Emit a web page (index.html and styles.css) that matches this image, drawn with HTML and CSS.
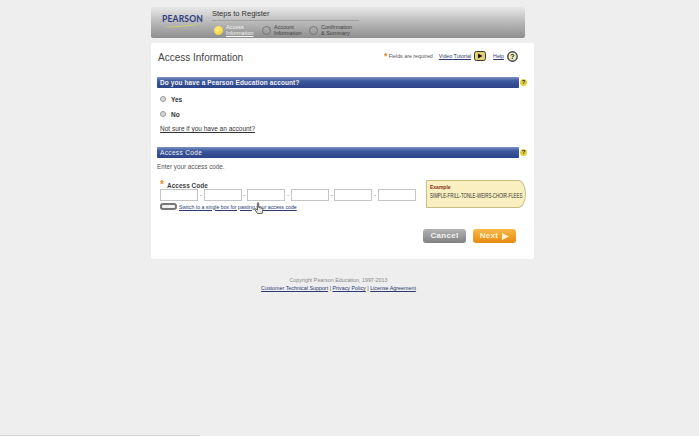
FILE: index.html
```html
<!DOCTYPE html>
<html lang="en">
<head>
<meta charset="utf-8">
<title>Access Information</title>
<link rel="stylesheet" href="styles.css">
</head>
<body>
<div class="page">
  <header class="top">
    <div class="logo"><span class="logo-text">PEARSON</span>
      <svg class="swoosh" width="40" height="4" viewBox="0 0 40 4"><path d="M1 3 Q20 2 39 0 Q20 4 1 3Z" fill="#d8d060"/></svg>
    </div>
    <div class="steps-wrap">
      <div class="steps-title">Steps to Register</div>
      <div class="steps">
        <div class="step on"><span class="dot"></span><span class="lab">Access<br><u>Information</u></span></div>
        <div class="step"><span class="dot"></span><span class="lab">Account<br>Information</span></div>
        <div class="step"><span class="dot"></span><span class="lab">Confirmation<br>&amp; Summary</span></div>
      </div>
    </div>
  </header>
  <main class="card">
    <div class="head">
      <h1>Access Information</h1>
      <div class="tools">
        <span class="star">*</span><span class="req">Fields are required</span>
        <a class="vt">Video Tutorial</a>
        <svg class="play" width="12" height="10" viewBox="0 0 12 10"><rect x=".5" y=".5" width="11" height="9" rx="2" fill="#e3d270" stroke="#333"/><path d="M4 2.500 8.500 5 4 7.500Z" fill="#111"/></svg>
        <a class="hp">Help</a>
        <svg class="q" width="11" height="11" viewBox="0 0 11 11"><circle cx="5.500" cy="5.500" r="4.700" fill="#eee9b0" stroke="#3b3f5c" stroke-width="1.400"/><text x="5.500" y="8" text-anchor="middle" class="qt">?</text></svg>
      </div>
    </div>

    <div class="bar-row bar-first"><div class="bar">Do you have a Pearson Education account?</div><span class="hint">?</span></div>
    <div class="choices">
      <label class="choice"><span class="radio"></span>Yes</label>
      <label class="choice"><span class="radio"></span>No</label>
    </div>
    <a class="notsure">Not sure if you have an account?</a>

    <div class="bar-row bar-second"><div class="bar">Access Code</div><span class="hint">?</span></div>
    <p class="enter">Enter your access code.</p>

    <div class="code-row">
      <div class="code-left">
        <div class="code-label"><span class="star2">*</span>Access Code</div>
        <div class="inputs">
          <span class="box"></span><i>-</i><span class="box"></span><i>-</i><span class="box"></span><i>-</i><span class="box"></span><i>-</i><span class="box"></span><i>-</i><span class="box"></span>
        </div>
        <div class="switch"><span class="mini"></span><a>Switch to a single box for pasting your access code</a>
          <svg class="cursor" width="10" height="13" viewBox="0 0 9 12"><path d="M3 1.200c0-.8 1.200-.8 1.200 0V5l3 .8c.8.3 1 .8.9 1.500L7.500 10.500H3L.8 7.200c-.4-.8.5-1.300 1-.8L3 7.500Z" fill="#eee" stroke="#444" stroke-width=".8"/></svg>
        </div>
      </div>
      <div class="example"><b>Example</b><span>SIMPLE-FRILL-TONLE-WEIRS-CHOIR-FLEES</span></div>
    </div>

    <div class="actions">
      <span class="btn cancel">Cancel</span>
      <span class="btn next">Next<svg width="7" height="7" viewBox="0 0 7 7"><path d="M0 0 7 3.500 0 7Z" fill="#fff4d8"/></svg></span>
    </div>
  </main>
  <footer class="foot">
    <div>Copyright Pearson Education, 1997-2013</div>
    <div class="links"><a>Customer Technical Support</a> | <a>Privacy Policy</a> | <a>License Agreement</a></div>
  </footer>
</div>
<div class="scroll"></div>
</body>
</html>
```
FILE: styles.css
```css
* { box-sizing: border-box; }
html { background: #eeeeee; }
html, body { margin: 0; height: 100%; }
body { background: #eeeeee; font-family: "Liberation Sans", Arial, sans-serif; color: #444; overflow: hidden; position: relative; }
.page { width: 383px; margin-left: 151px; padding-top: 7px; }
a { color: #2c3a70; text-decoration: underline; }

.top { width: 374px; height: 31px; display: flex; background: linear-gradient(#e8e8e8, #bdbdbd 45%, #8e8e8e); border-radius: 2px; }
.logo { width: 61px; display: flex; flex-direction: column; align-items: center; padding: 7px 0 0 2px; }
.logo-text { font: bold 8.500px/10px Lato, "Liberation Sans", sans-serif; color: #2f3b80; letter-spacing: .2px; }
.steps-wrap { padding-top: 2px; flex: 1; }
.steps-title { font-size: 7.500px; line-height: 10px; color: #333; padding-bottom: 1px; width: 147px; border-bottom: 1px solid #a0a0a0; }
.steps { display: flex; margin-top: 3px; padding-left: 2px; }
.step { display: flex; align-items: center; gap: 3px; font-size: 5.500px; line-height: 6px; color: #444; }
.step:nth-child(1) { width: 48px; }
.step:nth-child(2) { width: 47px; }
.step .dot { width: 9px; height: 9px; border-radius: 50%; border: 1px solid #777; flex: none; }
.step.on .dot { background: radial-gradient(circle at 40% 40%, #fff27a, #efc52a); border: 0; }
.step.on .lab { color: #f4f4f4; }

.card { background: #fff; height: 216px; margin-top: 5px; padding: 0 6px; border-radius: 2px; }
.head { display: flex; justify-content: space-between; height: 32px; }
h1 { margin: 0; padding: 8px 0 0 1px; font-size: 10px; line-height: 14px; font-weight: normal; color: #444; }
.tools { display: flex; align-items: center; height: 26px; font-size: 5.300px; padding-right: 10px; }
.star { color: #e58a1f; font-size: 9px; line-height: 9px; font-weight: bold; margin-right: 1px; }
.req { color: #555; }
.vt { margin-left: 6px; }
.play { margin-left: 3px; }
.hp { margin-left: 7px; }
.q { margin-left: 3px; }
.qt { font: bold 7px "Liberation Sans", sans-serif; fill: #222; }

.bar-row { display: flex; align-items: center; gap: 1px; }
.bar-first { margin-top: 2px; }
.bar-second { margin-top: 14px; }
.bar { width: 362px; height: 11px; background: linear-gradient(#7b92c4, #3e5a9e 35%, #2b4288); border-radius: 1px; color: #f2f2f2; font-size: 6.500px; font-weight: bold; line-height: 11px; padding-left: 3px; letter-spacing: .1px; }
.bar-second .bar { font-weight: normal; letter-spacing: .35px; }
.hint { width: 7px; height: 7px; border-radius: 50%; background: #e2d23a; color: #222; font-size: 6px; font-weight: bold; line-height: 7px; text-align: center; }

.choices { display: flex; flex-direction: column; gap: 9px; padding: 8px 0 0 3px; }
.choice { display: flex; align-items: center; gap: 5px; height: 6px; font-size: 6.500px; font-weight: bold; color: #333; }
.radio { width: 6px; height: 6px; border-radius: 50%; background: #d8d8d8; border: 1px solid #999; }
.notsure { display: block; font-size: 6.500px; line-height: 8px; margin: 8px 0 0 3px; color: #333; }

.enter { margin: 5px 0 0; font-size: 6.300px; line-height: 8px; color: #555; }
.code-row { display: flex; justify-content: space-between; margin-top: 9px; }
.code-left { padding-left: 3px; }
.code-label { display: flex; font-size: 6.500px; font-weight: bold; line-height: 8px; color: #444; height: 9px; padding-top: 2px; }
.star2 { color: #e58a1f; width: 7px; font-size: 10px; line-height: 5px; }
.inputs { display: flex; align-items: center; }
.box { width: 38px; height: 12px; background: #fff; border: 1px solid #c4c4c4; }
.inputs i { width: 5.600px; text-align: center; font-size: 6px; font-style: normal; color: #666; }
.switch { display: flex; align-items: center; gap: 2px; margin-top: 2px; font-size: 5.200px; position: relative; height: 7px; }
.mini { width: 17px; height: 7px; border-radius: 3px; background: #f2f2f2; border: 2px solid #777; }
.cursor { position: absolute; left: 94px; top: -1px; }
.example { width: 100px; height: 28px; margin: 0 2px 0 0; background: #faefc0; border: 1px solid #c8bd86; border-radius: 1px 8px 8px 1px / 1px 14px 14px 1px; padding: 3px; display: flex; flex-direction: column; font-size: 5px; line-height: 7px; color: #333; }
.example b { color: #8c2a1a; }
.example span { font-size: 4.400px; white-space: nowrap; margin-top: 1px; transform: scaleY(1.45); }

.actions { display: flex; justify-content: flex-end; gap: 7px; padding-right: 12px; margin-top: 19px; }
.btn { height: 14px; border-radius: 3px; font-size: 8px; line-height: 14px; font-weight: bold; color: #f4f4f4; text-align: center; letter-spacing: .3px; }
.cancel { width: 43px; background: linear-gradient(#b4b4b4, #808080); }
.next { width: 43px; background: linear-gradient(#fbb948, #e58a12); color: #fff4d8; display: flex; align-items: center; justify-content: center; gap: 4px; }

.foot { text-align: center; font-size: 5.350px; line-height: 8px; color: #888; margin-top: 17px; padding-right: 8px; }
.links { color: #444; }
.scroll { position: absolute; left: 0; bottom: 0; width: 200px; height: 1px; background: #d4d4d4; }
```
